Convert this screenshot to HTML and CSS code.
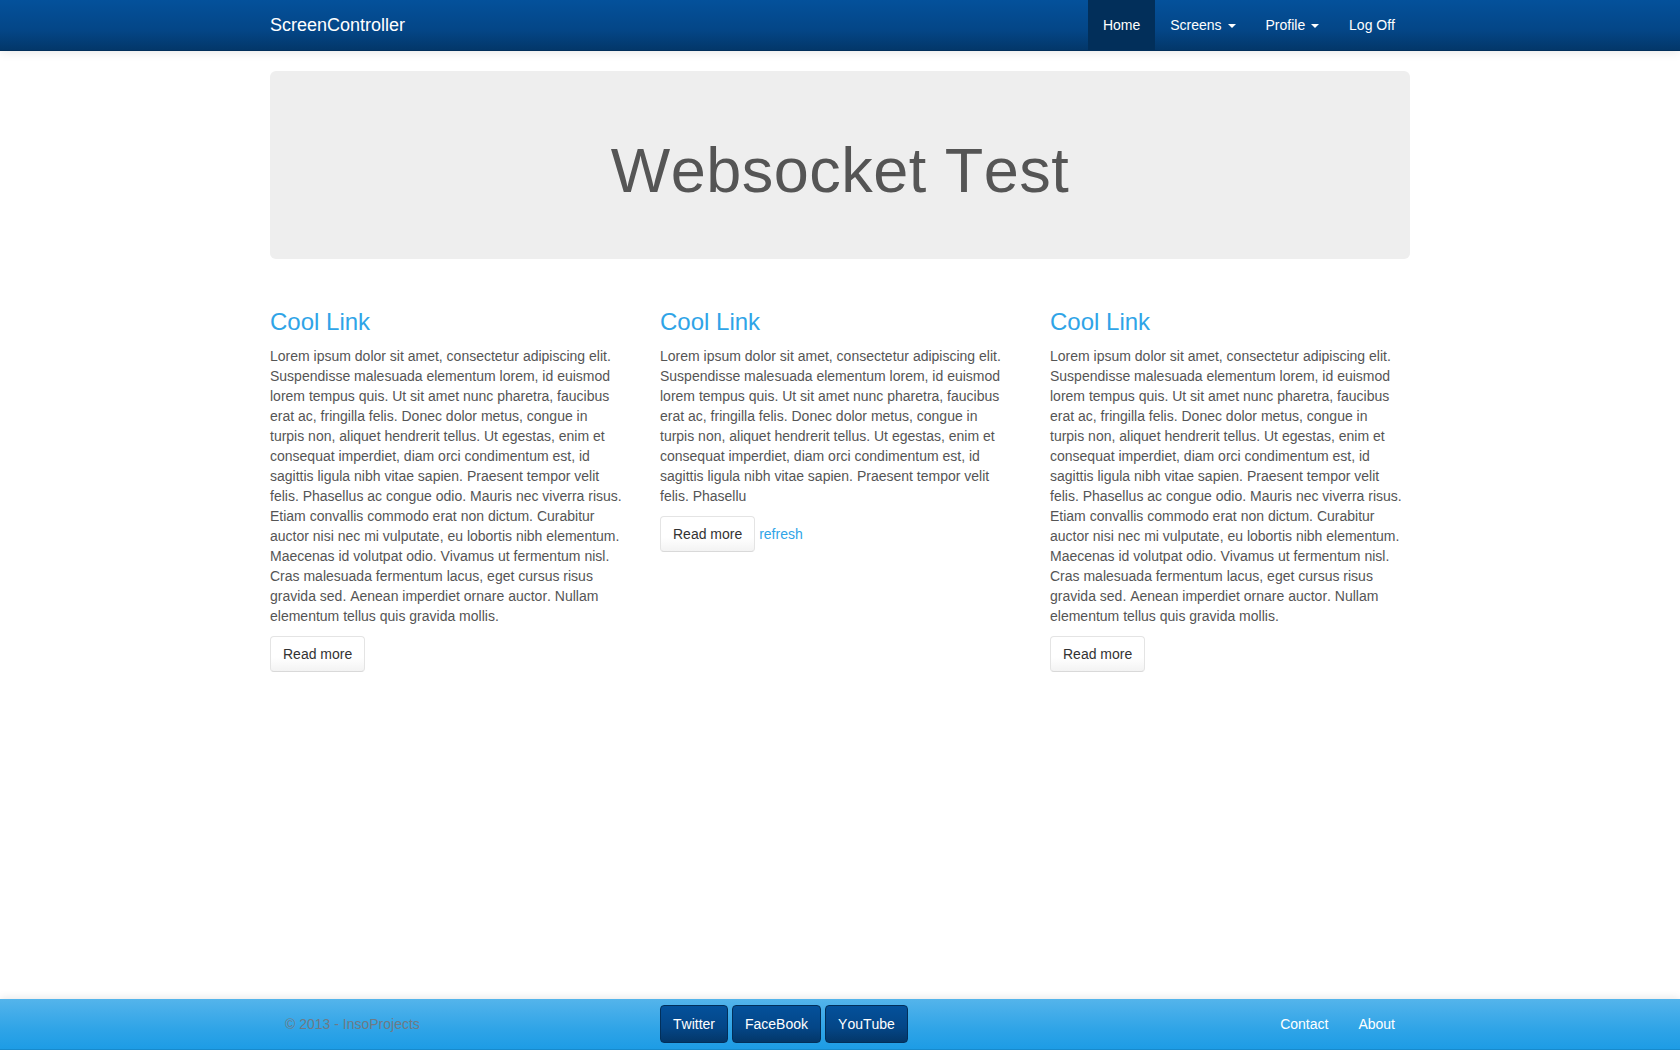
FILE: index.html
```html
<!DOCTYPE html>
<html lang="en">
<head>
<meta charset="utf-8">
<title>Websocket Test - ScreenController</title>
<link rel="stylesheet" href="styles.css">
</head>
<body>
<header class="navbar">
  <div class="container navbar-inner">
    <a class="brand" href="#">ScreenController</a>
    <ul class="nav">
      <li class="active"><a href="#">Home</a></li>
      <li><a href="#">Screens <b class="caret"></b></a></li>
      <li><a href="#">Profile <b class="caret"></b></a></li>
      <li><a href="#">Log Off</a></li>
    </ul>
  </div>
</header>

<main class="container main">
  <div class="jumbotron">
    <h1>Websocket Test</h1>
  </div>

  <div class="row">
    <div class="col">
      <h2><a href="#">Cool Link</a></h2>
      <p>Lorem ipsum dolor sit amet, consectetur adipiscing elit. Suspendisse malesuada elementum lorem, id euismod lorem tempus quis. Ut sit amet nunc pharetra, faucibus erat ac, fringilla felis. Donec dolor metus, congue in turpis non, aliquet hendrerit tellus. Ut egestas, enim et consequat imperdiet, diam orci condimentum est, id sagittis ligula nibh vitae sapien. Praesent tempor velit felis. Phasellus ac congue odio. Mauris nec viverra risus. Etiam convallis commodo erat non dictum. Curabitur auctor nisi nec mi vulputate, eu lobortis nibh elementum. Maecenas id volutpat odio. Vivamus ut fermentum nisl. Cras malesuada fermentum lacus, eget cursus risus gravida sed. Aenean imperdiet ornare auctor. Nullam elementum tellus quis gravida mollis.</p>
      <p><a class="btn" href="#">Read more</a></p>
    </div>
    <div class="col">
      <h2><a href="#">Cool Link</a></h2>
      <p>Lorem ipsum dolor sit amet, consectetur adipiscing elit. Suspendisse malesuada elementum lorem, id euismod lorem tempus quis. Ut sit amet nunc pharetra, faucibus erat ac, fringilla felis. Donec dolor metus, congue in turpis non, aliquet hendrerit tellus. Ut egestas, enim et consequat imperdiet, diam orci condimentum est, id sagittis ligula nibh vitae sapien. Praesent tempor velit felis. Phasellu</p>
      <p><a class="btn" href="#">Read more</a> <a class="link" href="#">refresh</a></p>
    </div>
    <div class="col">
      <h2><a href="#">Cool Link</a></h2>
      <p>Lorem ipsum dolor sit amet, consectetur adipiscing elit. Suspendisse malesuada elementum lorem, id euismod lorem tempus quis. Ut sit amet nunc pharetra, faucibus erat ac, fringilla felis. Donec dolor metus, congue in turpis non, aliquet hendrerit tellus. Ut egestas, enim et consequat imperdiet, diam orci condimentum est, id sagittis ligula nibh vitae sapien. Praesent tempor velit felis. Phasellus ac congue odio. Mauris nec viverra risus. Etiam convallis commodo erat non dictum. Curabitur auctor nisi nec mi vulputate, eu lobortis nibh elementum. Maecenas id volutpat odio. Vivamus ut fermentum nisl. Cras malesuada fermentum lacus, eget cursus risus gravida sed. Aenean imperdiet ornare auctor. Nullam elementum tellus quis gravida mollis.</p>
      <p><a class="btn" href="#">Read more</a></p>
    </div>
  </div>
</main>

<footer class="footer">
  <div class="container footer-row">
    <p class="copyright">&copy; 2013 - InsoProjects</p>
    <div class="social">
      <a class="btn-dark" href="#">Twitter</a>
      <a class="btn-dark" href="#">FaceBook</a>
      <a class="btn-dark" href="#">YouTube</a>
    </div>
    <ul class="footer-nav">
      <li><a href="#">Contact</a></li>
      <li><a href="#">About</a></li>
    </ul>
  </div>
</footer>
</body>
</html>
```
FILE: styles.css
```css
* { box-sizing: border-box; }

html, body { height: 100%; }

body {
  margin: 0;
  min-height: 100vh;
  display: flex;
  flex-direction: column;
  font-family: "Liberation Sans", Arial, Helvetica, sans-serif;
  font-size: 14px;
  line-height: 20px;
  color: #555;
  background: #fff;
  font-kerning: none;
}

a { text-decoration: none; }

.container {
  width: 1170px;
  margin: 0 auto;
  padding: 0 15px;
}

/* Top navbar */
.navbar {
  height: 51px;
  background-image: linear-gradient(to bottom, #04519b 0%, #044687 60%, #033769 100%);
  border-bottom: 1px solid #022f5a;
  box-shadow: 0 1px 10px rgba(0, 0, 0, 0.1);
  position: relative;
  z-index: 2;
}

.navbar-inner {
  display: flex;
  justify-content: space-between;
  height: 50px;
}

.brand {
  font-size: 18px;
  line-height: 20px;
  padding: 15px 0;
  color: #fff;
}

.nav {
  display: flex;
  list-style: none;
  margin: 0;
  padding: 0;
}

.nav a {
  display: block;
  padding: 15px;
  line-height: 20px;
  color: #fff;
}

.nav .active a {
  background-color: #022f5a;
}

.caret {
  display: inline-block;
  width: 0;
  height: 0;
  margin-left: 2px;
  vertical-align: middle;
  border-top: 4px solid #fff;
  border-left: 4px solid transparent;
  border-right: 4px solid transparent;
}

/* Main */
.main {
  padding-top: 20px;
  flex: 1 0 auto;
}

.jumbotron {
  background: #eee;
  border-radius: 6px;
  padding: 48px 60px;
  margin-bottom: 30px;
  text-align: center;
}

.jumbotron h1 {
  font-size: 63px;
  font-weight: normal;
  line-height: 1.1;
  letter-spacing: 0.5px;
  margin: 17px 0 6px;
  color: #555;
}

.row {
  display: grid;
  grid-template-columns: repeat(3, 1fr);
  column-gap: 30px;
}

.col h2 {
  font-size: 24px;
  font-weight: normal;
  line-height: 1.1;
  margin: 20px 0 10px;
}

.col h2 a { color: #2fa4e7; }

.col p {
  margin: 0 0 10px;
  padding-right: 6px;
}

.btn {
  display: inline-block;
  padding: 7px 12px;
  font-size: 14px;
  line-height: 20px;
  color: #333;
  background-image: linear-gradient(to bottom, #fff 0%, #fff 60%, #f3f3f3 100%);
  border: 1px solid #e4e4e4;
  border-bottom-color: #d9d9d9;
  border-radius: 4px;
}

.link { color: #2fa4e7; }

/* Footer */
.footer {
  flex-shrink: 0;
  height: 51px;
  background-image: linear-gradient(to bottom, #54b4eb 0%, #2fa4e7 60%, #1d9ce5 100%);
  border-bottom: 1px solid #178acc;
  box-shadow: 0 -1px 8px rgba(0, 0, 0, 0.1);
}

.footer-row {
  display: grid;
  grid-template-columns: repeat(3, 1fr);
  column-gap: 30px;
  height: 50px;
  align-items: center;
}

.copyright {
  margin: 0 0 0 15px;
  color: #6f7a85;
}

.social {
  display: flex;
  gap: 4px;
}

.btn-dark {
  display: inline-block;
  padding: 8px 12px;
  line-height: 20px;
  color: #fff;
  background-image: linear-gradient(to bottom, #04519b 0%, #044687 60%, #033769 100%);
  border: 1px solid #022f5a;
  border-radius: 4px;
}

.footer-nav {
  display: flex;
  justify-content: flex-end;
  list-style: none;
  margin: 0;
  padding: 0;
}

.footer-nav a {
  display: block;
  padding: 15px;
  line-height: 20px;
  color: #fff;
}
```
